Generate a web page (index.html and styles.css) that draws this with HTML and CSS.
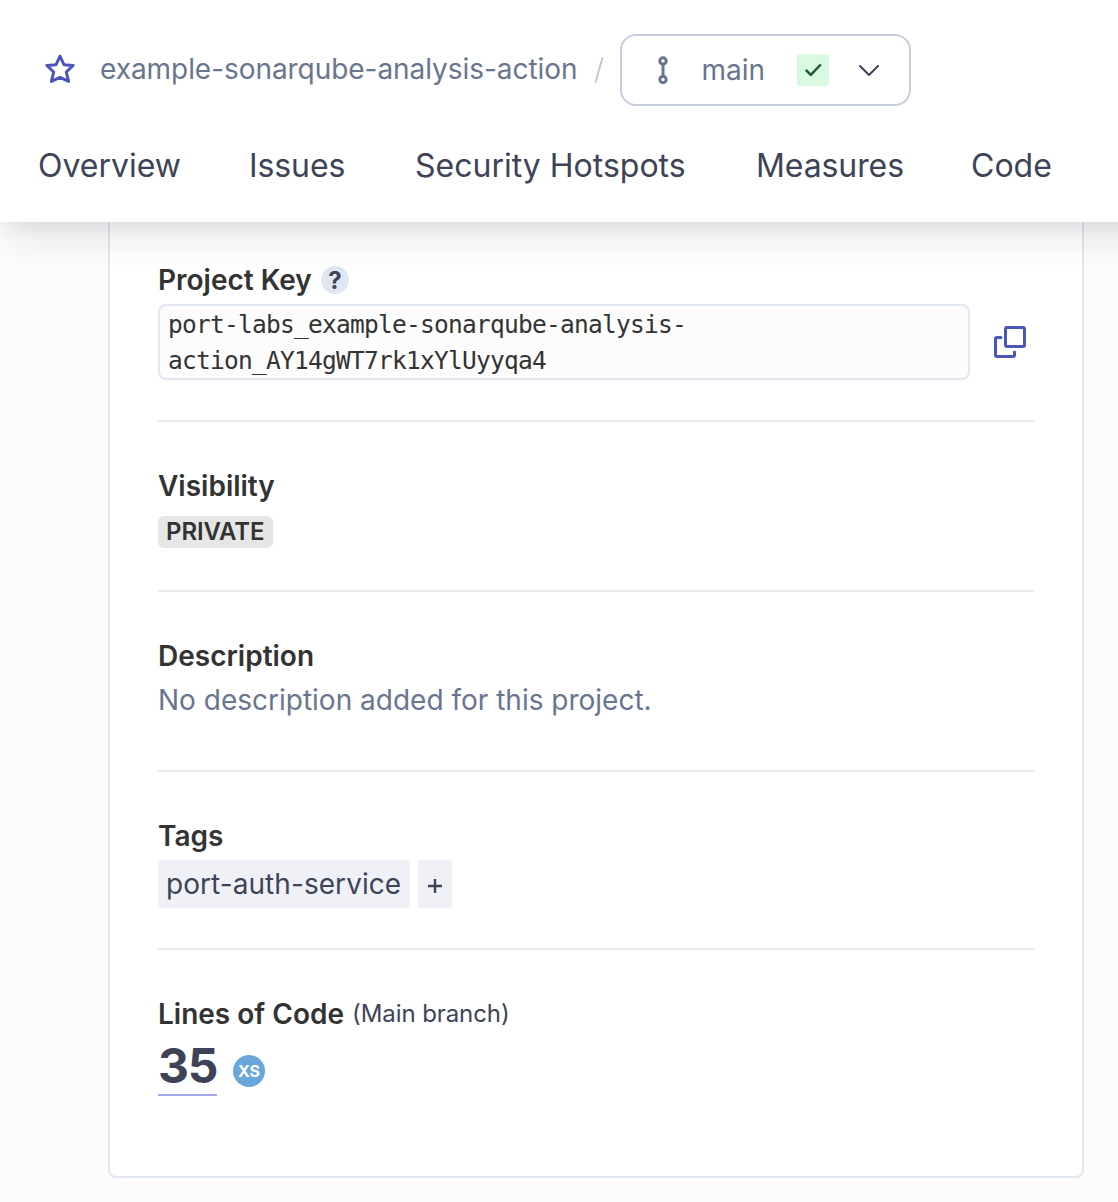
FILE: index.html
```html
<!DOCTYPE html>
<html lang="en">
<head>
<meta charset="utf-8">
<title>Project information</title>
<link rel="stylesheet" href="styles.css">
</head>
<body>
<header class="header">
  <div class="crumbs">
    <svg class="star" width="32" height="32" viewBox="0 0 32 32"><path d="M16 3.200 19.900 11.700 29.200 12.400 22.300 19 24.600 28.400 16 24.300 7.400 28.400 9.700 19 2.800 12.400 12.100 11.700Z"/></svg>
    <a class="project">example-sonarqube-analysis-action</a>
    <svg class="slash" width="10" height="26" viewBox="0 0 10 26"><path d="M8.400 1 1.600 25"/></svg>
    <button class="branch">
      <svg class="branch-icon" width="12" height="30" viewBox="0 0 12 30"><circle cx="6" cy="6" r="3.200"/><circle cx="6" cy="24.500" r="3.200"/><path d="M6 9v12.500"/></svg>
      <span class="branch-name">main</span>
      <span class="passed"><svg width="32" height="32" viewBox="0 0 32 32"><path d="m8.800 15.800 5 5L23.800 10.500"/></svg></span>
      <svg class="chevron" width="22" height="14" viewBox="0 0 22 14"><path d="m2 3 9 9 9-9"/></svg>
    </button>
  </div>
  <nav class="tabs">
    <a class="tab overview">Overview</a>
    <a class="tab issues">Issues</a>
    <a class="tab hotspots">Security Hotspots</a>
    <a class="tab measures">Measures</a>
    <a class="tab code">Code</a>
  </nav>
</header>
<main class="card">
  <section class="section key">
    <h2 class="title">Project Key <span class="help">?</span></h2>
    <div class="key-row">
      <code class="key-value">port-labs_example-sonarqube-analysis-<br>action_AY14gWT7rk1xYlUyyqa4</code>
      <svg class="copy" width="34" height="34" viewBox="0 0 34 34"><rect x="12.500" y="2.500" width="19" height="19" rx="1.500"/><path d="M8 12.500H4q-1.500 0-1.500 1.500v16q0 1.500 1.500 1.500h16q1.500 0 1.500-1.500V27"/></svg>
    </div>
  </section>
  <section class="section visibility">
    <h2 class="title">Visibility</h2>
    <span class="badge">PRIVATE</span>
  </section>
  <section class="section description">
    <h2 class="title">Description</h2>
    <p class="empty">No description added for this project.</p>
  </section>
  <section class="section tags">
    <h2 class="title">Tags</h2>
    <div class="tag-row">
      <span class="tag">port-auth-service</span>
      <button class="add"><svg width="16" height="16" viewBox="0 0 16 16"><path d="M8 1v14M1 8h14"/></svg></button>
    </div>
  </section>
  <section class="section lines">
    <h2 class="title">Lines of Code <span class="note">(Main branch)</span></h2>
    <div class="size-row">
      <a class="count">35</a>
      <span class="size">XS</span>
    </div>
  </section>
</main>
</body>
</html>
```
FILE: styles.css
```css
* { box-sizing: border-box; }
body {
  margin: 0;
  height: 1202px;
  overflow: hidden;
  background: #fcfcfc;
  font-family: Inter, "Liberation Sans", sans-serif;
  color: #3e4357;
}
svg { display: block; flex: none; fill: none; stroke-linecap: round; stroke-linejoin: round; }
button { font: inherit; border: 0; padding: 0; color: inherit; }
.header {
  position: relative;
  height: 222px;
  padding-top: 34px;
  background: #fff;
  box-shadow: 12px -4px 16px 8px rgba(29, 33, 47, .07), 24px 0 36px 16px rgba(29, 33, 47, .1);
}
.crumbs { display: flex; align-items: center; height: 72px; padding-left: 44px; }
.star { margin-top: -2px; stroke: #4b56bb; stroke-width: 3; }
.project { width: 477px; margin: -2px 0 0 24px; font-size: 28px; line-height: 40px; letter-spacing: -.05px; color: #69758f; white-space: nowrap; }
.slash { margin-left: 17px; stroke: #c8c8c8; stroke-width: 2; }
.branch {
  display: flex;
  align-items: center;
  width: 291px;
  height: 72px;
  margin-left: 16px;
  padding-left: 34.500px;
  border: 2px solid #c5cddf;
  border-radius: 16px;
  background: #fff;
}
.branch-icon { stroke: #69758f; stroke-width: 3; }
.branch-name { width: 64px; margin-left: 33px; text-align: left; font-size: 28px; line-height: 40px; color: #69758f; }
.passed { margin-left: 31.500px; border-radius: 4px; background: #d9f9e0; }
.passed path { stroke: #215a35; stroke-width: 2.5; stroke-linecap: butt; }
.chevron { margin-left: 29px; stroke: #3e4357; stroke-width: 2; }
.tabs { display: flex; padding: 36px 0 0 38px; font-size: 32px; line-height: 48px; white-space: nowrap; }
.overview { width: 211px; }
.issues { width: 166px; letter-spacing: -.1px; }
.hotspots { width: 341px; }
.measures { width: 215px; letter-spacing: -.1px; }
.card {
  width: 976px;
  height: 956px;
  margin-left: 108px;
  padding: 0 48px;
  border: 2px solid #e1e6f3;
  border-top: 0;
  border-radius: 0 0 8px 8px;
  background: #fff;
}
.section { padding-top: 44px; border-bottom: 2px solid #ebebeb; }
.title { display: flex; align-items: center; height: 40px; margin: 0; font-size: 28px; line-height: 40px; font-weight: 600; color: #333; white-space: nowrap; }
.key { height: 200px; padding-top: 38px; }
.help { width: 28px; height: 28px; margin-left: 9px; border-radius: 50%; background: #e1e6f3; color: #3e4357; font-size: 24px; line-height: 29px; font-weight: 700; text-align: center; }
.key-row { display: flex; align-items: center; gap: 23px; margin-top: 4px; }
.key-value {
  width: 812px;
  height: 76px;
  padding: 1px 8px 0;
  border: 2px solid #e1e6f3;
  border-radius: 8px;
  background: #fcfcfd;
  color: #333;
  font: 24.5px/36px "DejaVu Sans Mono", monospace;
  letter-spacing: -.75px;
}
.copy { stroke: #4b56bb; stroke-width: 3; }
.visibility { height: 170px; }
.badge { display: block; width: 115px; height: 32px; margin-top: 10px; padding-left: 8px; border-radius: 6px; background: #e6e6e6; color: #333; font-size: 24px; line-height: 32px; font-weight: 600; letter-spacing: -.1px; }
.description { height: 180px; }
.empty { margin: 4px 0 0; font-size: 28px; line-height: 40px; color: #69758f; white-space: nowrap; }
.tags { height: 178px; }
.tag-row { display: flex; gap: 8px; margin-top: 4px; }
.tag { width: 252px; height: 48px; padding-left: 8px; border-radius: 4px; background: #f0f1f7; font-size: 28px; line-height: 48px; letter-spacing: .06px; white-space: nowrap; }
.add { display: grid; place-items: center; width: 34px; height: 48px; padding-top: 3px; border-radius: 4px; background: #f0f1f7; }
.add svg { stroke: #3e4357; stroke-width: 2.4; stroke-linecap: butt; }
.lines { border-bottom: 0; }
.note { margin-left: 8px; color: #3e4357; font-size: 24px; font-weight: 400; letter-spacing: -.08px; }
.size-row { display: flex; gap: 16px; margin-top: 4px; }
.count { width: 59px; height: 58px; border-bottom: 2px solid #a3a9ec; font-size: 48px; line-height: 56px; font-weight: 700; letter-spacing: -1.2px; }
.size { width: 32px; height: 32px; margin-top: 17px; border-radius: 50%; background: #69a7da; color: #fff; font-size: 16px; line-height: 32px; font-weight: 700; text-align: center; }
```
